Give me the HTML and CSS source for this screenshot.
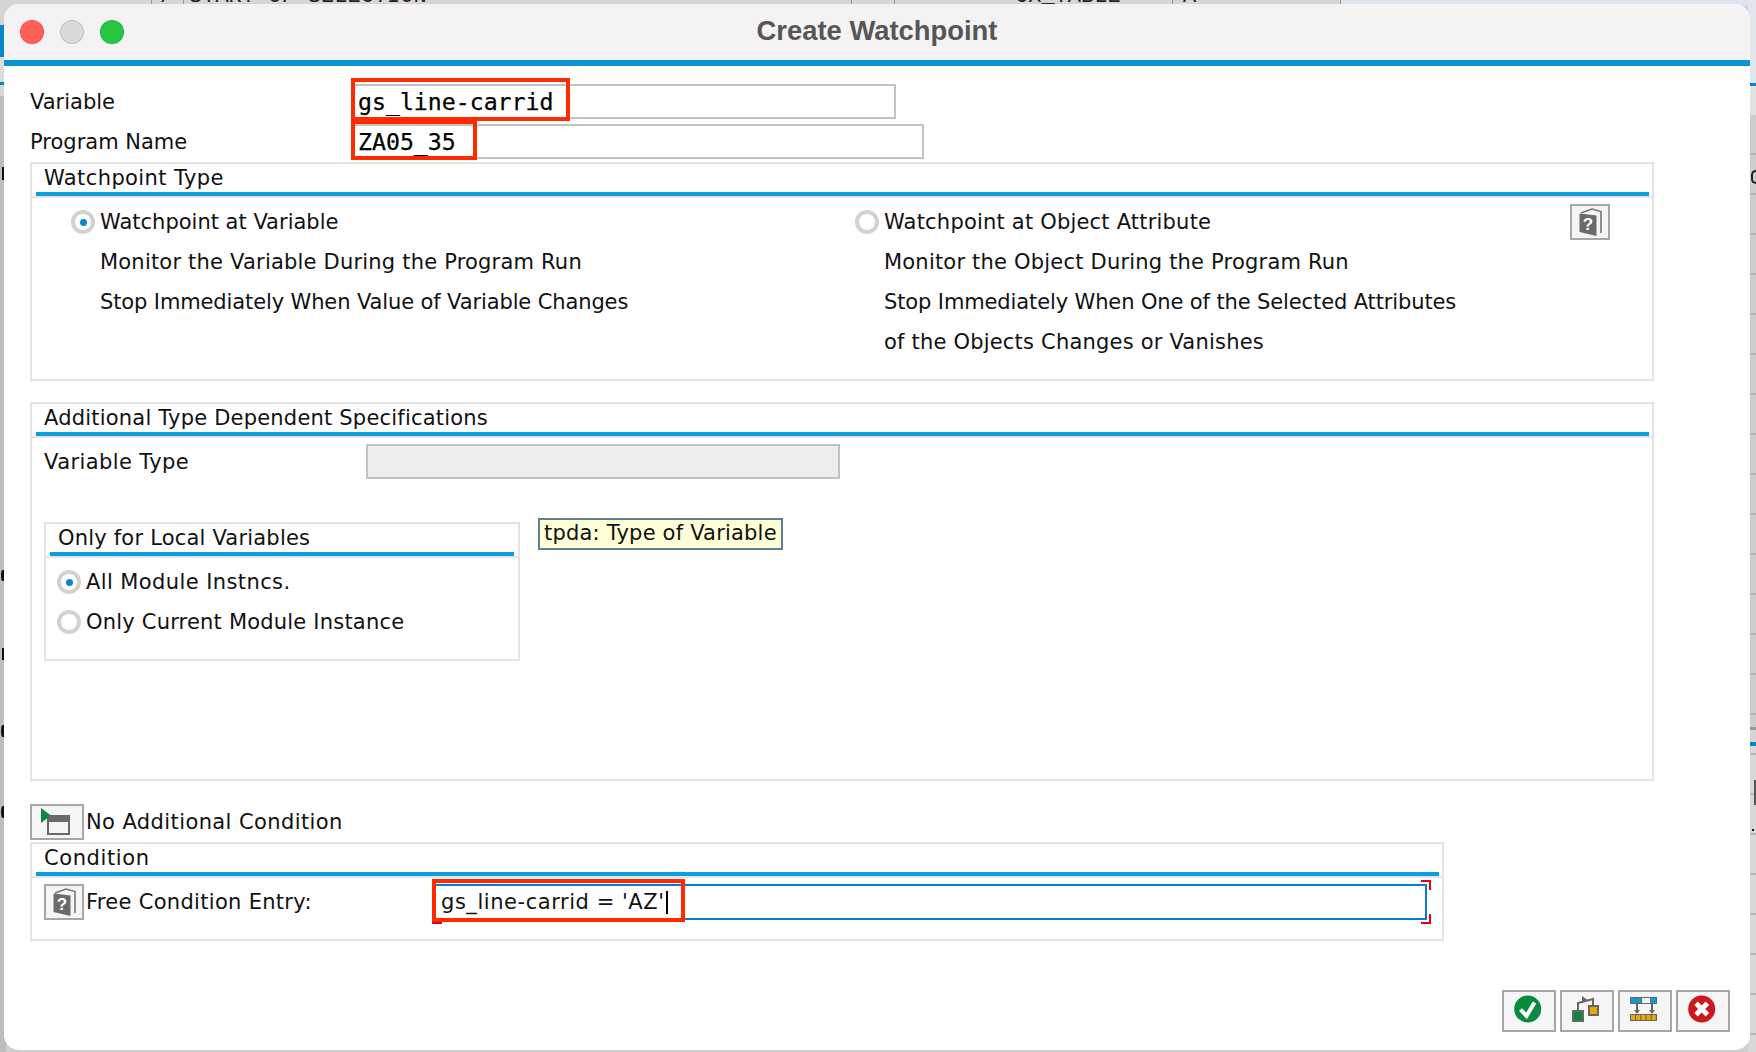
FILE: index.html
```html
<!DOCTYPE html>
<html lang="en">
<head>
<meta charset="utf-8">
<title>Create Watchpoint</title>
<link rel="stylesheet" href="styles.css">
</head>
<body>
<div class="backdrop" aria-hidden="true">
  <div class="bd-top">
    <span class="bd-text bd-slash">/</span>
    <span class="bd-text bd-start">START-OF-SELECTION</span>
    <span class="bd-text bd-cx">CX_TABLE</span>
    <span class="bd-text bd-a">A</span>
    <span class="bd-rule bd-r1"></span><span class="bd-rule bd-r2"></span><span class="bd-rule bd-r3"></span><span class="bd-rule bd-r4"></span><span class="bd-rule bd-r5"></span><span class="bd-rule bd-r6"></span>
  </div>
  <div class="bd-left">
    <span class="bd-mark bd-m1"></span><span class="bd-mark bd-m2"></span><span class="bd-mark bd-m3"></span><span class="bd-mark bd-m4"></span><span class="bd-mark bd-m5"></span>
  </div>
  <div class="bd-right">
    <span class="bd-mark bd-m6"></span><span class="bd-mark bd-m7"></span><span class="bd-mark bd-m8"></span>
  </div>
</div>

<main class="window">
  <header class="titlebar">
    <div class="lights">
      <span class="light light-red"></span>
      <span class="light light-grey"></span>
      <span class="light light-green"></span>
    </div>
    <h1 class="title">Create Watchpoint</h1>
  </header>

  <div class="body">
    <div class="field-row field-row-first">
      <label class="field-label">Variable</label>
      <div class="field field-var">
        <span class="mono">gs_line-carrid</span>
        <span class="mark mark-var"></span>
      </div>
    </div>
    <div class="field-row field-row-second">
      <label class="field-label">Program Name</label>
      <div class="field field-prog">
        <span class="mono">ZA05_35</span>
        <span class="mark mark-prog"></span>
      </div>
    </div>

    <section class="group group-type">
      <div class="group-head"><div class="group-title ls-wide">Watchpoint Type</div></div>
      <div class="type-grid">
        <div class="type-col">
          <div class="radio-row ls-none"><span class="radio radio-on"></span>Watchpoint at Variable</div>
          <div class="sub-row">Monitor the Variable During the Program Run</div>
          <div class="sub-row ls-tight">Stop Immediately When Value of Variable Changes</div>
        </div>
        <div class="type-col">
          <div class="radio-row"><span class="radio"></span>Watchpoint at Object Attribute</div>
          <div class="sub-row">Monitor the Object During the Program Run</div>
          <div class="sub-row ls-tight">Stop Immediately When One of the Selected Attributes</div>
          <div class="sub-row">of the Objects Changes or Vanishes</div>
        </div>
        <button class="tool tool-help tool-help-top" type="button">
          <svg class="icon" viewBox="0 0 36 32" width="36" height="32"><path class="book-back" d="M9 7 20 3l9 2.6V27"/><path class="book-cover" d="M7.500 7.500 24.500 9.500V30L7.500 26z"/><text class="book-q" x="16" y="24">?</text></svg>
        </button>
      </div>
    </section>

    <section class="group group-spec">
      <div class="group-head"><div class="group-title">Additional Type Dependent Specifications</div></div>
      <div class="vartype-row">
        <label class="vartype-label ls-wide">Variable Type</label>
        <div class="field-disabled"></div>
      </div>
      <div class="local-row">
        <section class="group group-local">
          <div class="group-head"><div class="group-title group-title-local">Only for Local Variables</div></div>
          <div class="local-list">
            <div class="radio-row local-radio ls-wide"><span class="radio radio-on"></span>All Module Instncs.</div>
            <div class="radio-row local-radio"><span class="radio"></span>Only Current Module Instance</div>
          </div>
        </section>
        <div class="tooltip">tpda: Type of Variable</div>
      </div>
    </section>

    <div class="nocond-row">
      <button class="tool tool-cond" type="button">
        <svg class="icon" viewBox="0 0 50 32" width="50" height="32"><rect class="win-frame" x="16" y="10" width="21" height="18"/><rect class="win-bar" x="15" y="9" width="23" height="7"/><path class="win-tri" d="M9 2 19 9.500 9 17z"/></svg>
      </button>
      <span class="ls-wide">No Additional Condition</span>
    </div>

    <section class="group group-cond">
      <div class="group-head"><div class="group-title ls-wider">Condition</div></div>
      <div class="cond-row">
        <button class="tool tool-help" type="button">
          <svg class="icon" viewBox="0 0 36 32" width="36" height="32"><path class="book-back" d="M9 7 20 3l9 2.600V27"/><path class="book-cover" d="M7.500 7.500 24.500 9.500V30L7.500 26z"/><text class="book-q" x="16" y="24">?</text></svg>
        </button>
        <span class="cond-label">Free Condition Entry:</span>
        <div class="cond-input">
          <span class="cond-text">gs_line-carrid = 'AZ'</span><span class="caret"></span>
          <span class="corner corner-tr"></span><span class="corner corner-br"></span><span class="corner corner-bl"></span>
          <span class="mark mark-cond"></span>
        </div>
      </div>
    </section>

    <footer class="actions">
      <button class="tool tool-action" type="button">
        <svg class="icon" viewBox="0 0 50 38" width="50" height="38"><circle class="ok-disc" cx="23.700" cy="17" r="13.500"/><path class="ok-check" d="M16.500 17.500 22.500 24 30.500 10.500"/></svg>
      </button>
      <button class="tool tool-action" type="button">
        <svg class="icon" viewBox="0 0 50 38" width="50" height="38"><path class="hier-line" d="M16 19v-8l15-4v9"/><path class="hier-arrow" d="M20 4l6 4.500-6 2.500z"/><rect class="hier-green" x="11" y="19" width="10" height="10"/><rect class="hier-orange" x="27" y="14" width="9" height="9"/></svg>
      </button>
      <button class="tool tool-action" type="button">
        <svg class="icon" viewBox="0 0 50 38" width="50" height="38"><rect class="tr-dark" x="10" y="5" width="27" height="7"/><rect class="tr-blue" x="11" y="6" width="4.500" height="5"/><rect class="tr-blue" x="16.500" y="6" width="4.500" height="5"/><rect class="tr-chain" x="22" y="6" width="8" height="5"/><rect class="tr-blue" x="31" y="6" width="5" height="5"/><path class="tr-arrow" d="M16 12h2v6h2l-3 4-3-4h2z"/><path class="tr-arrow" d="M31 12h2v6h2l-3 4-3-4h2z"/><rect class="tr-dark" x="10" y="22" width="27" height="7"/><rect class="tr-orange" x="11" y="23" width="4" height="5"/><rect class="tr-orange" x="16.200" y="23" width="4" height="5"/><rect class="tr-orange" x="21.400" y="23" width="4" height="5"/><rect class="tr-orange" x="26.600" y="23" width="4" height="5"/><rect class="tr-orange" x="31.800" y="23" width="4" height="5"/></svg>
      </button>
      <button class="tool tool-action" type="button">
        <svg class="icon" viewBox="0 0 50 38" width="50" height="38"><circle class="no-disc" cx="23.700" cy="17" r="13.500"/><path class="no-x" d="M18 11.300 29.400 22.700M29.400 11.300 18 22.700"/></svg>
      </button>
    </footer>
  </div>
</main>
</body>
</html>
```
FILE: styles.css
```css
* { box-sizing: border-box; }

html, body {
  margin: 0;
  height: 1052px;
  overflow: hidden;
}

body {
  position: relative;
  background: #cfcfcf;
  font-family: "DejaVu Sans", sans-serif;
  font-size: 21px;
  letter-spacing: .2px;
  color: #111;
}

.ls-none { letter-spacing: 0; }
.ls-tight { letter-spacing: -.12px; }
.ls-wide { letter-spacing: .4px; }
.ls-wider { letter-spacing: .6px; }

/* Application visible behind the dialog */
.backdrop { position: absolute; inset: 0; overflow: hidden; }

.bd-top {
  position: absolute;
  left: 0; top: 0; right: 0;
  height: 6px;
  overflow: hidden;
  background: linear-gradient(to right, #d6d6d6 0, #d6d6d6 1340px, #dde5ea 1340px);
}

.bd-text {
  position: absolute;
  bottom: -1px;
  height: 20px;
  line-height: 20px;
  font-family: "Liberation Mono", monospace;
  font-size: 22px;
  letter-spacing: 0;
  color: #222;
  white-space: nowrap;
}
.bd-slash { left: 160px; }
.bd-start { left: 189px; }
.bd-cx { left: 1015px; }
.bd-a { left: 1183px; }

.bd-rule { position: absolute; top: 0; width: 1px; height: 6px; background: #9a9a9a; }
.bd-r1 { left: 151px; }
.bd-r2 { left: 183px; }
.bd-r3 { left: 851px; }
.bd-r4 { left: 894px; }
.bd-r5 { left: 1172px; }
.bd-r6 { left: 1340px; }

.bd-left {
  position: absolute;
  left: 0; top: 0; bottom: 0;
  width: 6px;
  background: linear-gradient(to bottom,
    #d6d6d6 0, #d6d6d6 25px,
    #0a86c8 25px, #0a86c8 57px,
    #dcdcdc 57px, #dcdcdc 82px,
    #0a86c8 82px, #0a86c8 85px,
    #d6d6d6 85px, #d6d6d6 96px,
    #bdbdbd 96px);
}

.bd-right {
  position: absolute;
  right: 0; top: 0; bottom: 0;
  width: 8px;
  background:
    repeating-linear-gradient(to bottom, transparent 0, transparent 38px, #b4b4b4 38px, #b4b4b4 40px) 0 115px / 100% 100% no-repeat,
    linear-gradient(to bottom,
      #dfe7ec 0, #dfe7ec 83px,
      #0a86c8 83px, #0a86c8 86px,
      #e2e2e2 86px, #e2e2e2 115px,
      #cdcdcd 115px, #cdcdcd 727px,
      #999 727px, #999 730px,
      #d6d6d6 730px, #d6d6d6 742px,
      #0a86c8 742px, #0a86c8 746px,
      #d8d8d8 746px);
}

.bd-mark { position: absolute; background: #111; }
.bd-m1 { left: 2px; top: 167px; width: 2px; height: 13px; }
.bd-m2 { left: 1px; top: 570px; width: 3px; height: 11px; border-radius: 50% 0 0 50%; }
.bd-m3 { left: 2px; top: 648px; width: 2px; height: 12px; }
.bd-m4 { left: 1px; top: 725px; width: 3px; height: 12px; border-radius: 50% 0 0 50%; }
.bd-m5 { left: 1px; top: 806px; width: 3px; height: 12px; border-radius: 50% 0 0 50%; }
.bd-m6 { right: 0; top: 170px; width: 5px; height: 14px; background: transparent; border: 2px solid #222; border-right: 0; border-radius: 5px 0 0 5px; }
.bd-m7 { right: 0; top: 780px; width: 2px; height: 25px; background: #555; }
.bd-m8 { right: 2px; top: 829px; width: 2px; height: 2px; }

/* Dialog window */
.window {
  position: relative;
  margin: 4px 6px 0 4px;
  width: 1746px;
  height: 1046px;
  background: #fff;
  border-radius: 15px;
  overflow: hidden;
}

.titlebar {
  position: relative;
  display: flex;
  align-items: center;
  justify-content: center;
  height: 62px;
  padding-bottom: 2px;
  background: #f4f2f3;
  border-bottom: 6px solid #0a94d8;
}

.lights {
  position: absolute;
  left: 16px;
  top: 16px;
  display: flex;
  gap: 16px;
}

.light {
  width: 24px;
  height: 24px;
  border-radius: 50%;
  border: 1px solid rgba(0, 0, 0, .12);
}
.light-red { background: #fe5f57; }
.light-grey { background: #dcdbdb; }
.light-green { background: #28c73f; }

.title {
  margin: 0;
  font-family: "Liberation Sans", sans-serif;
  font-size: 27.4px;
  font-weight: 700;
  letter-spacing: 0;
  color: #565656;
}

.body { padding: 18px 0 0 26px; }

/* Top fields */
.field-row { display: flex; align-items: center; height: 35px; letter-spacing: 0; }
.field-row-second { margin-top: 5px; }
.field-label { width: 321px; }

.field {
  position: relative;
  height: 35px;
  border: 2px solid #c2c2c2;
  padding-left: 5px;
  display: flex;
  align-items: center;
}
.field-var { width: 545px; }
.field-prog { width: 573px; }

.mono {
  font-family: "DejaVu Sans Mono", monospace;
  font-size: 23.2px;
  line-height: 32px;
  color: #000;
  -webkit-text-stroke: .25px #000;
}

.mark {
  position: absolute;
  border: 4px solid #ff2a00;
  pointer-events: none;
}
.mark-var { left: -2px; top: -8px; width: 219px; height: 43px; }
.mark-prog { left: -2px; top: -6px; width: 126px; height: 40px; }
.mark-cond { left: -3px; top: -7px; width: 253px; height: 43px; }

/* Group boxes */
.group { border: 2px solid #e4e4e4; background: #fff; }
.group-head { height: 34px; border-bottom: 2px solid #e4e4e4; }
.group-title {
  height: 32px;
  margin: 0 3px 0 4px;
  padding-left: 8px;
  line-height: 28px;
  border-bottom: 4px solid #0a9de0;
}
.group-title-local { margin: 0 4px; }

.group-type { width: 1624px; height: 219px; margin-top: 3px; }
.group-spec { width: 1624px; height: 379px; margin-top: 21px; }
.group-cond { width: 1414px; height: 99px; margin-top: 2px; }
.group-local { width: 476px; height: 139px; }

.type-grid {
  display: grid;
  grid-template-columns: 784px 754px 40px;
  padding-top: 4px;
}

.type-col { padding-left: 39px; }

.radio-row {
  display: flex;
  align-items: center;
  gap: 5px;
  height: 40px;
}

.sub-row {
  height: 40px;
  line-height: 41px;
  padding-left: 29px;
  white-space: nowrap;
}

.radio {
  flex: none;
  display: flex;
  align-items: center;
  justify-content: center;
  width: 24px;
  height: 24px;
  border-radius: 50%;
  border: 4px solid #d2d2d2;
  background: #fff;
}
.radio-on::after {
  content: "";
  width: 7px;
  height: 7px;
  border-radius: 50%;
  background: #0a84d0;
}

/* Tool buttons */
.tool {
  display: flex;
  align-items: center;
  justify-content: center;
  padding: 0;
  border: 2px solid #a6a6a6;
  background: #f5f5f5;
}
.tool-help { flex: none; width: 40px; height: 36px; }
.tool-help-top { margin-top: 2px; }
.tool-cond { width: 54px; height: 36px; }
.tool-action { width: 54px; height: 42px; }
.icon { display: block; }

.book-back { fill: none; stroke: #777; stroke-width: 1.600; }
.book-cover { fill: #6a6a6a; }
.book-q {
  font-family: "Liberation Sans", sans-serif;
  font-size: 17px;
  font-weight: 700;
  fill: #fff;
  text-anchor: middle;
}

.win-frame { fill: #f5f5f5; stroke: #6a6a6a; stroke-width: 2; }
.win-bar { fill: #6a6a6a; }
.win-tri { fill: #0a8a3e; }

.ok-disc { fill: #0a8a3e; }
.ok-check { fill: none; stroke: #fff; stroke-width: 4; }
.no-disc { fill: #cc181e; }
.no-x { fill: none; stroke: #fff; stroke-width: 5; }

.hier-line { fill: none; stroke: #666; stroke-width: 2; }
.hier-arrow { fill: #666; }
.hier-green { fill: #0a8a3e; stroke: #666; stroke-width: 2; }
.hier-orange { fill: #eea800; stroke: #666; stroke-width: 2; }

.tr-dark { fill: #666; }
.tr-blue { fill: #0a9de0; }
.tr-chain { fill: #f5f5f5; }
.tr-orange { fill: #eea800; }
.tr-arrow { fill: #666; }

/* Additional specs */
.vartype-row { display: flex; align-items: center; margin-top: 6px; padding-left: 12px; }
.vartype-label { width: 322px; }
.field-disabled {
  width: 474px;
  height: 35px;
  background: #ededed;
  border: 2px solid #c2c2c2;
}

.local-row {
  display: flex;
  align-items: flex-start;
  gap: 18px;
  margin-top: 39px;
  padding-left: 12px;
}
.group-local { margin-top: 4px; }
.local-list { padding: 4px 0 0 11px; }

.tooltip {
  height: 32px;
  padding: 0 4px;
  line-height: 27px;
  background: #ffffd8;
  border: 2px solid #5f8090;
  white-space: nowrap;
}

/* Condition */
.nocond-row { display: flex; align-items: center; gap: 2px; height: 36px; margin-top: 23px; }

.cond-row { display: flex; align-items: center; padding: 6px 0 0 12px; }
.cond-label { width: 349px; padding-left: 2px; letter-spacing: .3px; white-space: nowrap; }

.cond-input {
  position: relative;
  width: 994px;
  height: 36px;
  border: 2px solid #0a7ec2;
  padding-left: 6px;
  display: flex;
  align-items: center;
}
.cond-text { letter-spacing: .55px; white-space: nowrap; }
.caret { width: 2px; height: 23px; margin-left: 1px; background: #000; }

.corner { position: absolute; width: 10px; height: 10px; border: 0 solid #e0001a; }
.corner-tr { right: -6px; top: -6px; border-width: 2px 2px 0 0; }
.corner-br { right: -6px; bottom: -6px; border-width: 0 2px 2px 0; }
.corner-bl { left: -3px; bottom: -6px; border-width: 0 0 2px 2px; }

.actions {
  display: flex;
  justify-content: flex-end;
  gap: 4px;
  margin-top: 49px;
  padding-right: 20px;
}
```
